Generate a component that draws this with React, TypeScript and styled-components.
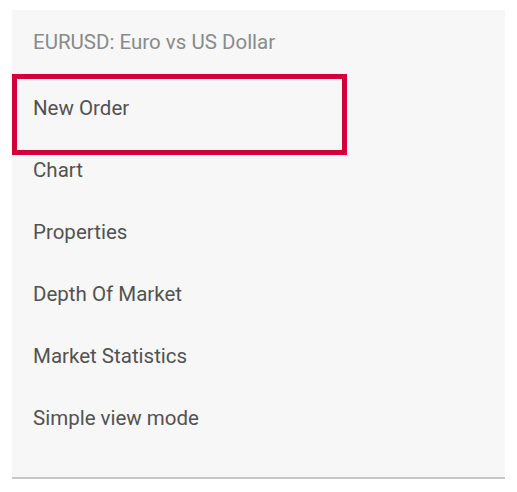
import styled, { createGlobalStyle } from "styled-components";

const GlobalStyle = createGlobalStyle`
  body {
    margin: 0;
    background: #ffffff;
    font-family: Roboto, "Liberation Sans", sans-serif;
  }
`;

const items = [
  "New Order",
  "Chart",
  "Properties",
  "Depth Of Market",
  "Market Statistics",
  "Simple view mode",
];

export default function App() {
  return (
    <>
      <GlobalStyle />
      <Page>
        <Panel>
          <Title>EURUSD: Euro vs US Dollar</Title>
          <List>
            {items.map((label, i) => (
              <Item key={label} $focused={i === 0}>
                {label}
              </Item>
            ))}
          </List>
        </Panel>
      </Page>
    </>
  );
}

const Page = styled.div`
  padding: 10px 12px 0 12px;
`;

const Panel = styled.div`
  width: 493px;
  background: #f7f7f7;
  border-bottom: 2px solid #c8c8c8;
  padding-bottom: 28px;
`;

const Title = styled.div`
  height: 67px;
  box-sizing: border-box;
  padding: 20px 0 0 21px;
  font-size: 20.5px;
  line-height: 24px;
  color: #8a8a8a;
`;

const List = styled.div`
  display: flex;
  flex-direction: column;
`;

const Item = styled.div<{ $focused?: boolean }>`
  position: relative;
  height: 62px;
  display: flex;
  align-items: center;
  padding-left: 21px;
  font-size: 20.5px;
  color: #525252;

  ${({ $focused }) =>
    $focused &&
    `
    &::after {
      content: "";
      position: absolute;
      top: -3px;
      left: 0;
      width: 335px;
      height: 81px;
      box-sizing: border-box;
      border: 5px solid #d1003a;
    }
  `}
`;
